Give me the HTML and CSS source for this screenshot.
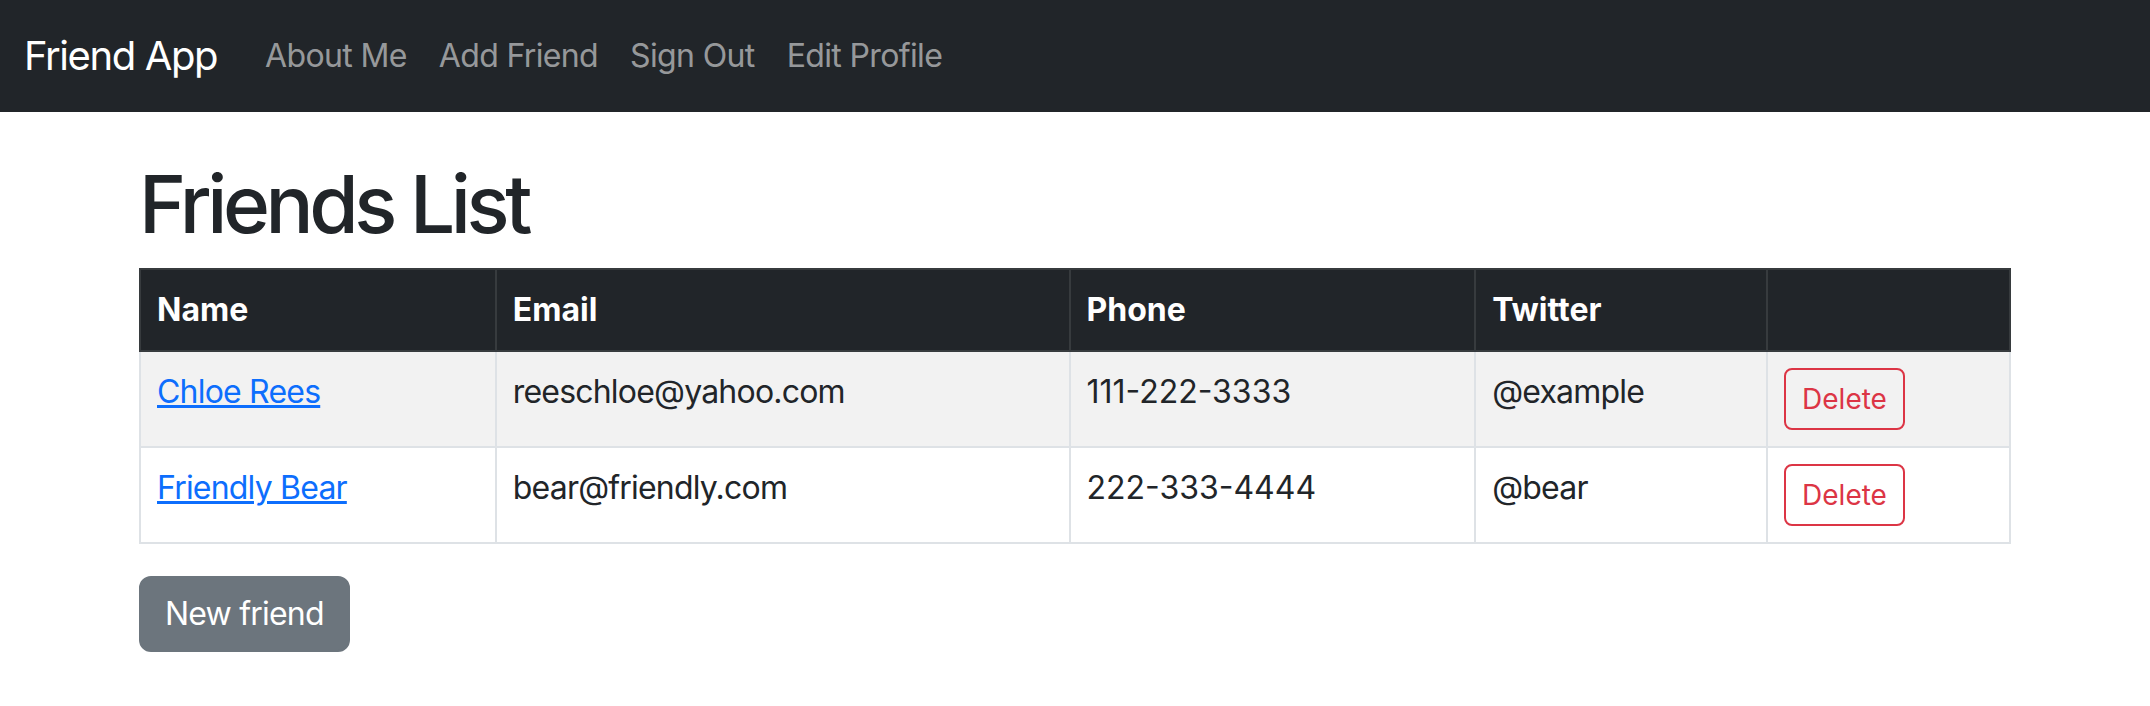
FILE: index.html
```html
<!DOCTYPE html>
<html lang="en">
<head>
<meta charset="utf-8">
<title>Friend App</title>
<link rel="stylesheet" href="styles.css">
</head>
<body>
<nav class="navbar">
  <a class="brand" href="#">Friend App</a>
  <ul class="nav">
    <li><a class="nav-link" href="#">About Me</a></li>
    <li><a class="nav-link" href="#">Add Friend</a></li>
    <li><a class="nav-link" href="#">Sign Out</a></li>
    <li><a class="nav-link" href="#">Edit Profile</a></li>
  </ul>
</nav>
<main class="container">
  <h1 class="title">Friends List</h1>
  <table class="friends">
    <colgroup>
      <col class="c-name"><col class="c-email"><col class="c-phone"><col class="c-twitter"><col class="c-action">
    </colgroup>
    <thead>
      <tr><th>Name</th><th>Email</th><th>Phone</th><th>Twitter</th><th></th></tr>
    </thead>
    <tbody>
      <tr class="striped">
        <td><a class="name-link" href="#">Chloe Rees</a></td>
        <td>reeschloe@yahoo.com</td>
        <td class="digits">111-222-3333</td>
        <td>@example</td>
        <td><button class="btn-delete">Delete</button></td>
      </tr>
      <tr>
        <td><a class="name-link" href="#">Friendly Bear</a></td>
        <td>bear@friendly.com</td>
        <td class="digits">222-333-4444</td>
        <td>@bear</td>
        <td><button class="btn-delete">Delete</button></td>
      </tr>
    </tbody>
  </table>
  <a class="btn-new" href="#">New friend</a>
</main>
</body>
</html>
```
FILE: styles.css
```css
* { box-sizing: border-box; }
body {
  margin: 0;
  font-family: Inter, "Liberation Sans", sans-serif;
  font-size: 32px;
  line-height: 48px;
  letter-spacing: -0.025em;
  color: #212529;
  background: #fff;
}
.navbar {
  display: flex;
  align-items: center;
  height: 112px;
  padding: 16px 24px;
  background: #212529;
}
.brand {
  font-size: 40px;
  line-height: 60px;
  letter-spacing: -0.035em;
  color: #fff;
  text-decoration: none;
  margin-right: 32px;
}
.nav {
  display: flex;
  list-style: none;
  margin: 0;
  padding: 0;
}
.nav-link {
  display: block;
  padding: 16px;
  font-size: 32px;
  line-height: 48px;
  letter-spacing: -0.02em;
  color: rgba(255,255,255,0.55);
  text-decoration: none;
}
.container {
  width: 1920px;
  margin: 0 auto;
  padding: 44px 24px 0;
}
.title {
  margin: 0 0 16px;
  font-size: 80px;
  line-height: 96px;
  font-weight: 500;
  letter-spacing: -0.055em;
}
.friends {
  width: 100%;
  border-collapse: collapse;
  margin-bottom: 32px;
  border: 2px solid #dee2e6;
}
.c-name { width: 356px; }
.c-email { width: 574px; }
.c-phone { width: 406px; }
.c-twitter { width: 292px; }
.c-action { width: 243px; }
.friends th, .friends td {
  padding: 16px;
  border: 2px solid #dee2e6;
  text-align: left;
  vertical-align: top;
}
.friends th {
  background: #212529;
  color: #fff;
  border-color: #373b3e;
  font-weight: 700;
  letter-spacing: 0;
  vertical-align: bottom;
}
.friends td.digits { letter-spacing: 0; }
.friends tr.striped td { background: #f2f2f2; }
.name-link { color: #0d6efd; text-decoration: underline; }
.btn-delete {
  display: inline-block;
  font-family: inherit;
  font-size: 28px;
  line-height: 42px;
  letter-spacing: 0;
  padding: 8px 16px;
  border: 2px solid #dc3545;
  border-radius: 8px;
  color: #dc3545;
  background: transparent;
}
.btn-new {
  display: inline-block;
  padding: 12px 24px;
  font-size: 32px;
  line-height: 48px;
  border: 2px solid #6c757d;
  border-radius: 12px;
  background: #6c757d;
  color: #fff;
  text-decoration: none;
}
```
